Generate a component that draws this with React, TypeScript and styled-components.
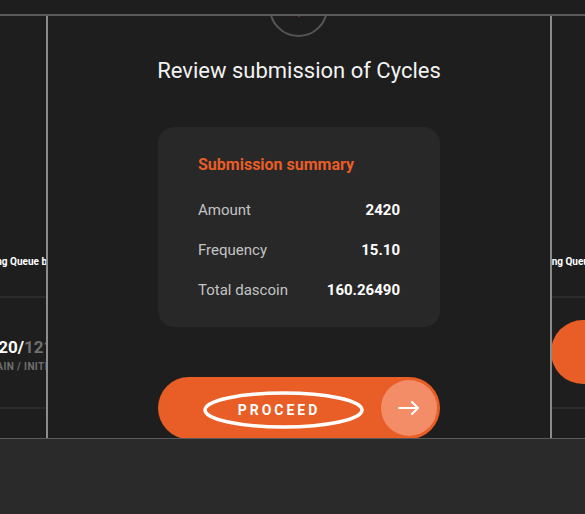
import React from "react";
import styled, { createGlobalStyle } from "styled-components";

const Global = createGlobalStyle`
  html, body { margin: 0; padding: 0; background: #1e1e1e; }
  body {
    width: 585px; height: 514px; overflow: hidden;
    font-family: Roboto, "Liberation Sans", sans-serif;
    -webkit-font-smoothing: antialiased;
  }
`;

const Page = styled.div`
  width: 585px;
  height: 514px;
  display: flex;
  flex-direction: column;
  background: #1e1e1e;
`;

const TopBar = styled.div`
  flex: none;
  height: 14px;
  background: #1e1e1e;
  border-bottom: 2px solid #5a5a5a;
  position: relative;
  z-index: 2;
`;

const Stage = styled.div`
  flex: none;
  height: 422px;
  display: grid;
  grid-template-columns: 46px 506px 1fr;
  overflow: hidden;
`;

const Footer = styled.div`
  flex: 1;
  background: #2a2a2a;
  border-top: 1px solid #5a5a5a;
`;

/* ---------- side cards (carousel neighbours) ---------- */

const Side = styled.div`
  display: flex;
  flex-direction: column;
  overflow: hidden;
  min-width: 0;
`;

const SideHeader = styled.div<{ $side: "left" | "right" }>`
  height: 280px;
  display: flex;
  align-items: flex-end;
  justify-content: ${(p) => (p.$side === "left" ? "flex-end" : "flex-start")};
  padding-bottom: 27px;
  box-sizing: border-box;
  white-space: nowrap;
`;

const SideTitle = styled.span<{ $offset: number; $side: "left" | "right" }>`
  flex: none;
  font-family: Roboto, "Noto Sans", sans-serif;
  font-weight: 700;
  font-size: 10px;
  line-height: 14px;
  color: #ffffff;
  ${(p) => (p.$side === "left" ? `margin-right: ${p.$offset}px;` : `margin-left: ${p.$offset}px;`)}
`;

const Divider = styled.div`
  height: 2px;
  flex: none;
  background: #2c2c2c;
`;

const SideMiddle = styled.div<{ $side: "left" | "right" }>`
  height: 109px;
  flex: none;
  display: flex;
  flex-direction: column;
  align-items: ${(p) => (p.$side === "left" ? "flex-end" : "flex-start")};
  padding-top: ${(p) => (p.$side === "left" ? "38px" : "22px")};
  box-sizing: border-box;
  white-space: nowrap;
`;

const Stat = styled.div`
  flex: none;
  font-family: Roboto, "Noto Sans", sans-serif;
  font-weight: 700;
  font-size: 17px;
  line-height: 22px;
  color: #ffffff;
  margin-right: -17px;
`;

const StatMuted = styled.span`
  color: #6f6f6f;
`;

const StatLabel = styled.div`
  flex: none;
  margin-top: 2px;
  font-family: Roboto, "Noto Sans", sans-serif;
  font-weight: 700;
  font-size: 10px;
  line-height: 14px;
  color: #6f6f6f;
  letter-spacing: 0.4px;
  margin-right: -15px;
`;

const OrangeDot = styled.div`
  flex: none;
  width: 64px;
  height: 64px;
  border-radius: 50%;
  background: #e95d26;
  margin-left: -1px;
`;

/* ---------- modal ---------- */

const Modal = styled.section`
  position: relative;
  border-left: 2px solid #8c8c8c;
  border-right: 2px solid #8c8c8c;
  display: flex;
  flex-direction: column;
  align-items: center;
  padding-top: 41px;
  background: #1e1e1e;
`;

const IconRing = styled.div`
  position: absolute;
  left: 50%;
  top: -38px;
  width: 59px;
  height: 59px;
  margin-left: -30px;
  box-sizing: border-box;
  border: 2px solid #555555;
  border-radius: 50%;
  display: flex;
  align-items: center;
  justify-content: center;
`;

const Title = styled.h1`
  margin: 0;
  font-size: 22px;
  font-weight: 400;
  line-height: 28px;
  color: #f2f2f2;
  white-space: nowrap;
`;

const Card = styled.div`
  margin-top: 42px;
  width: 282px;
  height: 200px;
  box-sizing: border-box;
  padding: 28px 40px 0;
  background: #282828;
  border-radius: 16px;
  display: flex;
  flex-direction: column;
`;

const CardTitle = styled.h2`
  margin: 0 0 15px;
  font-size: 16px;
  font-weight: 700;
  line-height: 20px;
  color: #e95d26;
`;

const Row = styled.div`
  height: 40px;
  display: flex;
  align-items: center;
  justify-content: space-between;
  font-size: 15px;
  line-height: 40px;
`;

const Label = styled.span`
  color: #c4c4c4;
  font-weight: 400;
`;

const Value = styled.span`
  color: #ffffff;
  font-weight: 700;
`;

const Proceed = styled.button`
  position: relative;
  margin-top: 50px;
  width: 282px;
  height: 62px;
  flex: none;
  border: none;
  border-radius: 31px;
  background: #e95d26;
  padding: 0 3px 0 19px;
  display: flex;
  align-items: center;
  cursor: pointer;
  font-family: inherit;
`;

const ProceedLabel = styled.span`
  flex: 1;
  text-align: center;
  color: #ffffff;
  font-size: 14px;
  font-weight: 700;
  letter-spacing: 3px;
  padding-top: 3px;
`;

const ArrowDisc = styled.span`
  flex: none;
  width: 56px;
  height: 56px;
  border-radius: 50%;
  background: #f28d68;
  display: flex;
  align-items: center;
  justify-content: center;
`;

const Annotation = styled.svg`
  position: absolute;
  left: 45px;
  top: 13px;
  pointer-events: none;
  overflow: visible;
`;

export default function App() {
  return (
    <>
      <Global />
      <Page>
        <TopBar />
        <Stage>
          <Side>
            <SideHeader $side="left">
              <SideTitle $side="left" $offset={-6}>
                Pending Queue by
              </SideTitle>
            </SideHeader>
            <Divider />
            <SideMiddle $side="left">
              <Stat>
                20/<StatMuted>1210</StatMuted>
              </Stat>
              <StatLabel>MAIN / INITIAL</StatLabel>
            </SideMiddle>
            <Divider />
          </Side>

          <Modal>
            <IconRing>
              <svg width="20" height="20" viewBox="0 0 20 20">
                <path d="M10 19 L2 10 Q0 6 3 3 Q6 0 10 4 Q14 0 17 3 Q20 6 18 10 Z" fill="#e5471f" />
              </svg>
            </IconRing>
            <Title>Review submission of Cycles</Title>
            <Card>
              <CardTitle>Submission summary</CardTitle>
              <Row>
                <Label>Amount</Label>
                <Value>2420</Value>
              </Row>
              <Row>
                <Label>Frequency</Label>
                <Value>15.10</Value>
              </Row>
              <Row>
                <Label>Total dascoin</Label>
                <Value>160.26490</Value>
              </Row>
            </Card>
            <Proceed type="button">
              <ProceedLabel>PROCEED</ProceedLabel>
              <ArrowDisc>
                <svg width="22" height="14" viewBox="0 0 22 14" fill="none">
                  <path d="M1 7 H20 M14 1 L20 7 L14 13" stroke="#ffffff" strokeWidth="2" strokeLinecap="round" strokeLinejoin="round" />
                </svg>
              </ArrowDisc>
              <Annotation width="161" height="40" viewBox="0 0 161 40">
                <ellipse cx="80.5" cy="20" rx="78.5" ry="17" fill="none" stroke="#ffffff" strokeWidth="3.5" />
              </Annotation>
            </Proceed>
          </Modal>

          <Side>
            <SideHeader $side="right">
              <SideTitle $side="right" $offset={-26}>
                Pending Queue by
              </SideTitle>
            </SideHeader>
            <Divider />
            <SideMiddle $side="right">
              <OrangeDot />
            </SideMiddle>
            <Divider />
          </Side>
        </Stage>
        <Footer />
      </Page>
    </>
  );
}
